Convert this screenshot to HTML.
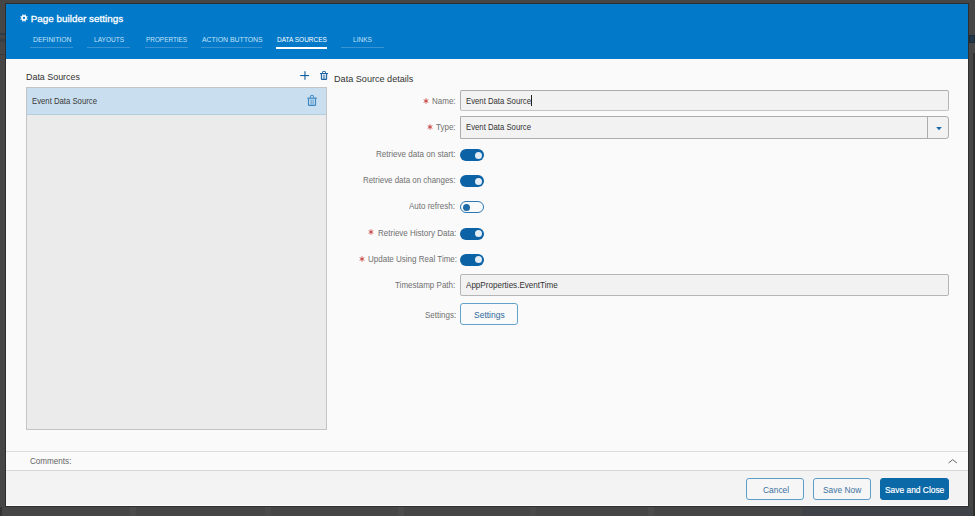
<!DOCTYPE html>
<html><head><meta charset="utf-8">
<style>
*{box-sizing:border-box;margin:0;padding:0}
html,body{width:975px;height:516px;overflow:hidden;background:#464646;font-family:"Liberation Sans",sans-serif}
.a{position:absolute}
.t{position:absolute;white-space:nowrap;transform-origin:0 0;line-height:1}
#modal{position:absolute;left:6px;top:4px;width:962px;height:502px;background:#fafafa;box-shadow:0 0 0 1px #2e2e2e}
#hdr{position:absolute;left:0;top:0;width:962px;height:55px;background:#0279c9}
.tab{position:absolute;top:43px;height:1px;background:#3a93d3}
.tabt{position:absolute;top:31.6px;color:#c5e2f7;font-size:8px}
.lbl{color:#707070;font-size:9px;margin-top:-.8px}
.req{color:#b23a3a;font-size:10px}
.inp{position:absolute;left:454px;width:489px;background:#f2f2f2;border:1px solid #b5b5b5}
.tog{position:absolute;left:454px;width:24px;height:12px;border-radius:6px;background:#0b62a4}
.tog i{position:absolute;left:14.5px;top:2.5px;width:7px;height:7px;border-radius:50%;background:#e3edf6}
.tog.off{background:#fafafa;border:1px solid #2b78b5}
.tog.off i{left:1.8px;top:1.5px;background:#1f6aa8}
.btn{position:absolute;top:474px;height:22px;border:1px solid #5f9dc9;border-radius:3px;background:#f6f6f6}
</style></head><body>
<div class="a" style="left:0;top:33px;width:6px;height:2px;background:#2f3b46"></div>
<div class="a" style="left:0;top:38px;width:6px;height:4px;background:#3a3f44"></div>
<div class="a" style="left:0;top:54px;width:6px;height:1px;background:#3a3a3a"></div>
<div class="a" style="left:969px;top:35px;width:6px;height:8px;background:#23374a;border:1px solid #1a2a3a"></div>
<div class="a" style="left:973px;top:53px;width:2px;height:463px;background:#2f2f2f"></div>
<div class="a" style="left:130px;top:507px;width:6px;height:9px;background:#4c4c4c"></div>
<div class="a" style="left:265px;top:507px;width:6px;height:9px;background:#4a4a4a"></div>
<div class="a" style="left:398px;top:507px;width:6px;height:9px;background:#4c4c4c"></div>
<div class="a" style="left:530px;top:507px;width:6px;height:9px;background:#4a4a4a"></div>
<div class="a" style="left:648px;top:507px;width:6px;height:9px;background:#4c4c4c"></div>
<div class="a" style="left:802px;top:507px;width:170px;height:9px;background:#3f4347"></div>
<div class="a" style="left:0;top:507px;width:2px;height:9px;background:#333"></div>
<div id="modal">
  <div id="hdr">
    <!-- gear -->
    <svg class="a" style="left:13.8px;top:10.3px" width="8" height="8" viewBox="-4 -4 8 8"><path fill="#fff" fill-rule="evenodd" d="M0.89 -3.70 L1.99 -3.24 L1.59 -2.18 L2.18 -1.59 L3.24 -1.99 L3.70 -0.89 L2.67 -0.42 L2.67 0.42 L3.70 0.89 L3.24 1.99 L2.18 1.59 L1.59 2.18 L1.99 3.24 L0.89 3.70 L0.42 2.67 L-0.42 2.67 L-0.89 3.70 L-1.99 3.24 L-1.59 2.18 L-2.18 1.59 L-3.24 1.99 L-3.70 0.89 L-2.67 0.42 L-2.67 -0.42 L-3.70 -0.89 L-3.24 -1.99 L-2.18 -1.59 L-1.59 -2.18 L-1.99 -3.24 L-0.89 -3.70 L-0.42 -2.67 L0.42 -2.67Z M1.15 0A1.15 1.15 0 1 0 -1.15 0A1.15 1.15 0 1 0 1.15 0Z"/></svg>
    <span class="t" style="left:24.7px;top:9.6px;font-size:9.8px;color:#fff;-webkit-text-stroke:.3px #fff;letter-spacing:.05px">Page builder settings</span>
    <div class="tab" style="left:24px;width:43px"></div>
    <span class="t tabt" style="left:26.5px;transform:scaleX(.845)">DEFINITION</span>
    <div class="tab" style="left:81px;width:43px"></div>
    <span class="t tabt" style="left:87.5px;transform:scaleX(.82)">LAYOUTS</span>
    <div class="tab" style="left:138.5px;width:43px"></div>
    <span class="t tabt" style="left:139.5px;transform:scaleX(.80)">PROPERTIES</span>
    <div class="tab" style="left:195px;width:61px"></div>
    <span class="t tabt" style="left:195.5px;transform:scaleX(.86)">ACTION BUTTONS</span>
    <div class="a" style="left:270px;top:43px;width:51px;height:1.5px;background:#fff"></div>
    <span class="t tabt" style="left:270.5px;color:#fff;transform:scaleX(.81)">DATA SOURCES</span>
    <div class="tab" style="left:335px;width:43px"></div>
    <span class="t tabt" style="left:346.5px;transform:scaleX(.82)">LINKS</span>
  </div>

  <!-- left panel -->
  <span class="t" style="left:20px;top:68.3px;font-size:9.5px;color:#333;transform:scaleX(.937)">Data Sources</span>
  <!-- plus -->
  <svg class="a" style="left:294px;top:67px" width="10" height="10" viewBox="300 71 10 10"><rect x="300.2" y="75" width="8.9" height="1.1" fill="#125f9e"/><rect x="304.4" y="71.2" width="1.1" height="8.6" fill="#125f9e"/></svg>
  <!-- small trash -->
  <svg class="a" style="left:313px;top:66px" width="10" height="11" viewBox="319 70 10 11"><g fill="none" stroke="#1d66a5"><path d="M322.5 73.2V71.9Q322.5 71.5 322.9 71.5H325.1Q325.5 71.5 325.5 71.9V73.2" stroke-width=".9"/><path d="M321.4 74V78.9Q321.4 79.4 321.9 79.4H326.1Q326.6 79.4 326.6 78.9V74" stroke-width="1.1"/><path d="M323.3 74.8V79M324.8 74.8V79" stroke-width=".7"/></g><rect x="320" y="73" width="8" height="1.1" fill="#1d66a5"/></svg>
  <div class="a" style="left:19.5px;top:83px;width:301.5px;height:343px;background:#ebebeb;border:1px solid #c4c4c4"></div>
  <div class="a" style="left:20.5px;top:84px;width:299.5px;height:27px;background:#c9dfef;border-bottom:1px solid #b3cde0"></div>
  <span class="t" style="left:26px;top:92.5px;font-size:9px;color:#3a3a3a;transform:scaleX(.86)">Event Data Source</span>
  <svg class="a" style="left:301px;top:90px" width="11" height="13" viewBox="307 94 11 13"><g fill="none" stroke="#3b87c3"><path d="M310.5 97.5V96.1Q310.5 95.5 311.1 95.5H312.9Q313.5 95.5 313.5 96.1V97.5" stroke-width="1"/><path d="M308.5 98.6V104.7Q308.5 105.3 309.1 105.3H314.9Q315.5 105.3 315.5 104.7V98.6" stroke-width="1.2"/><path d="M311.1 99.4V104.6M313.1 99.4V104.6" stroke-width=".8"/></g><rect x="307.4" y="97.4" width="9.5" height="1.3" rx=".3" fill="#3b87c3"/></svg>

  <!-- right form -->
  <span class="t" style="left:327.5px;top:69.9px;font-size:9.5px;color:#333;transform:scaleX(.958)">Data Source details</span>

  <svg class="a" style="left:416.7px;top:93.5px" width="6" height="6" viewBox="-3 -3 6 6"><path d="M0 -2.7V2.7M-2.34 -1.35L2.34 1.35M-2.34 1.35L2.34 -1.35" stroke="#c4352f" stroke-width=".85"/></svg>
  <span class="t lbl" style="left:426px;top:93.8px;transform:scaleX(.89)">Name:</span>
  <div class="inp" style="top:85.8px;height:21.7px;border-radius:2px;border-color:#ababab #b5b5b5 #c4c4c4 #b0b0b0"></div>
  <span class="t" style="left:459.5px;top:92.5px;font-size:9px;color:#333;transform:scaleX(.86)">Event Data Source</span>
  <div class="a" style="left:525px;top:91px;width:1px;height:11px;background:#222"></div>

  <svg class="a" style="left:421.4px;top:119.8px" width="6" height="6" viewBox="-3 -3 6 6"><path d="M0 -2.7V2.7M-2.34 -1.35L2.34 1.35M-2.34 1.35L2.34 -1.35" stroke="#c4352f" stroke-width=".85"/></svg>
  <span class="t lbl" style="left:430.3px;top:119.5px;transform:scaleX(.89)">Type:</span>
  <div class="inp" style="top:112px;height:23px;border-radius:0 3px 3px 0;border-color:#adadad"></div>
  <div class="a" style="left:921px;top:113px;width:1px;height:21px;background:#adadad"></div>
  <svg class="a" style="left:929.5px;top:122.6px" width="6" height="4" viewBox="0 0 6 4"><path d="M.2 0h5.6L3 3.2z" fill="#1567a8"/></svg>
  <span class="t" style="left:459.5px;top:119px;font-size:9px;color:#333;transform:scaleX(.86)">Event Data Source</span>

  <span class="t lbl" style="left:370px;top:146.5px;transform:scaleX(.897)">Retrieve data on start:</span>
  <div class="tog" style="top:145px"><i></i></div>
  <span class="t lbl" style="left:357px;top:172.5px;transform:scaleX(.88)">Retrieve data on changes:</span>
  <div class="tog" style="top:171px"><i></i></div>
  <span class="t lbl" style="left:403px;top:199.2px;transform:scaleX(.89)">Auto refresh:</span>
  <div class="tog off" style="top:197px"><i></i></div>
  <svg class="a" style="left:362.4px;top:225.4px" width="6" height="6" viewBox="-3 -3 6 6"><path d="M0 -2.7V2.7M-2.34 -1.35L2.34 1.35M-2.34 1.35L2.34 -1.35" stroke="#c4352f" stroke-width=".85"/></svg>
  <span class="t lbl" style="left:371.5px;top:225.5px;transform:scaleX(.89)">Retrieve History Data:</span>
  <div class="tog" style="top:223.5px"><i></i></div>
  <svg class="a" style="left:352.6px;top:251.6px" width="6" height="6" viewBox="-3 -3 6 6"><path d="M0 -2.7V2.7M-2.34 -1.35L2.34 1.35M-2.34 1.35L2.34 -1.35" stroke="#c4352f" stroke-width=".85"/></svg>
  <span class="t lbl" style="left:361.5px;top:251.5px;transform:scaleX(.89)">Update Using Real Time:</span>
  <div class="tog" style="top:249.5px"><i></i></div>

  <span class="t lbl" style="left:388.5px;top:277.5px;transform:scaleX(.89)">Timestamp Path:</span>
  <div class="inp" style="top:270px;height:21.6px;border-radius:2px"></div>
  <span class="t" style="left:459.5px;top:277px;font-size:9px;color:#333;transform:scaleX(.897)">AppProperties.EventTime</span>

  <span class="t lbl" style="left:419px;top:307.5px;transform:scaleX(.89)">Settings:</span>
  <div class="a" style="left:454px;top:299px;width:58px;height:22px;border:1px solid #64a2cc;border-radius:3px;background:#fafafa"></div>
  <span class="t" style="left:467.7px;top:306.6px;font-size:9px;color:#2f6a9c;transform:scaleX(.944)">Settings</span>

  <!-- comments bar -->
  <div class="a" style="left:0;top:447px;width:962px;height:20px;border-top:1px solid #dcdcdc;border-bottom:1px solid #d8d8d8;background:#fafafa"></div>
  <span class="t" style="left:24.1px;top:453.3px;font-size:9px;color:#666;transform:scaleX(.9)">Comments:</span>
  <svg class="a" style="left:942.3px;top:454.6px" width="10" height="5" viewBox="0 0 10 5"><path d="M.5 4L4.7 .7L8.9 4" fill="none" stroke="#666" stroke-width="1"/></svg>

  <!-- footer -->
  <div class="a" style="left:0;top:467px;width:962px;height:35px;background:#f3f3f3;border-bottom:1px solid #fff"></div>
  <div class="btn" style="left:740px;width:58px"></div>
  <span class="t" style="left:756.5px;top:481.5px;font-size:9px;color:#3d72a0;transform:scaleX(.933)">Cancel</span>
  <div class="btn" style="left:807px;width:58px"></div>
  <span class="t" style="left:817px;top:481.5px;font-size:9px;color:#3d72a0;transform:scaleX(.933)">Save Now</span>
  <div class="btn" style="left:874px;width:69px;background:#0b69a8;border-color:#0b69a8"></div>
  <span class="t" style="left:879px;top:481.5px;font-size:9px;color:#fff;-webkit-text-stroke:.2px #fff;transform:scaleX(.933)">Save and Close</span>
</div>
</body></html>
